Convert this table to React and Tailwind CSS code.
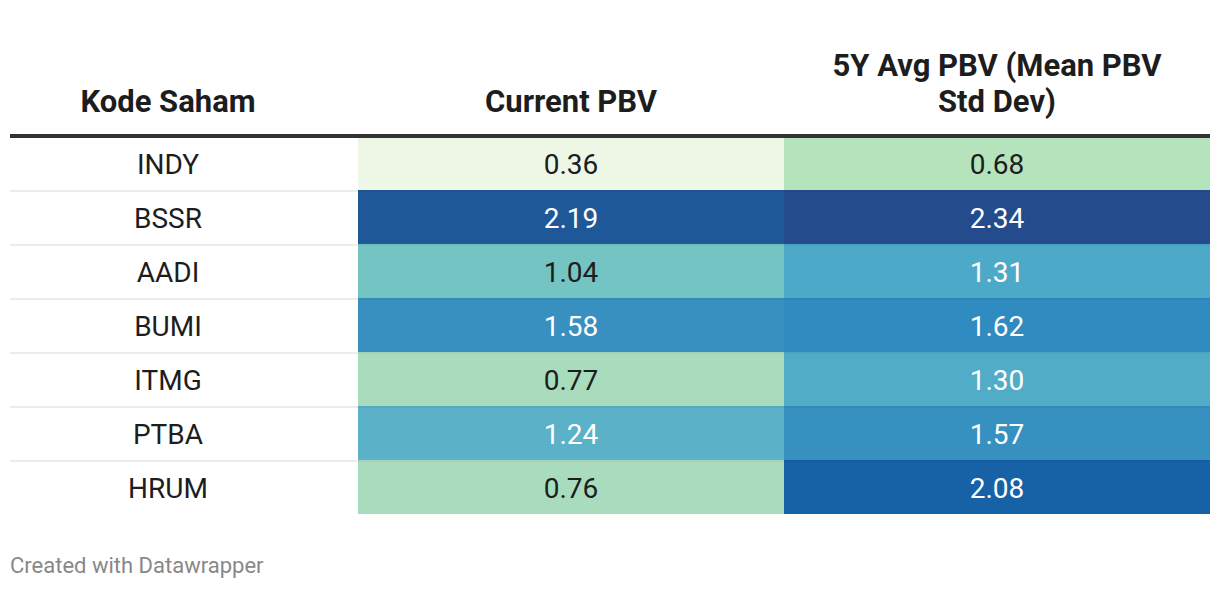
import React from "react";

const rows = [
  { code: "INDY", a: "0.36", ab: "bg-[#eef7e6]", at: "text-[#1d1d1d]", b: "0.68", bb: "bg-[#b5e3bb]", bt: "text-[#1d1d1d]" },
  { code: "BSSR", a: "2.19", ab: "bg-[#1f5899]", at: "text-white", b: "2.34", bb: "bg-[#244b8b]", bt: "text-white" },
  { code: "AADI", a: "1.04", ab: "bg-[#74c4c4]", at: "text-[#1d1d1d]", b: "1.31", bb: "bg-[#4da9c8]", bt: "text-white" },
  { code: "BUMI", a: "1.58", ab: "bg-[#3790c0]", at: "text-white", b: "1.62", bb: "bg-[#2f8bc0]", bt: "text-white" },
  { code: "ITMG", a: "0.77", ab: "bg-[#a8dcbd]", at: "text-[#1d1d1d]", b: "1.30", bb: "bg-[#51acc8]", bt: "text-white" },
  { code: "PTBA", a: "1.24", ab: "bg-[#5ab1c8]", at: "text-white", b: "1.57", bb: "bg-[#3690c0]", bt: "text-white" },
  { code: "HRUM", a: "0.76", ab: "bg-[#a9dcbe]", at: "text-[#1d1d1d]", b: "2.08", bb: "bg-[#1762a6]", bt: "text-white" },
];

export default function App() {
  return (
    <div
      className="w-[1220px] h-[590px] bg-white px-[10px] pt-[48px]"
      style={{ fontFamily: "Roboto, 'Liberation Sans', sans-serif" }}
    >
      <div className="grid grid-cols-[348px_426px_426px] items-end border-b-4 border-[#333333] pb-[14px] text-[31px] leading-[36px] font-bold text-[#1d1d1d]">
        <div className="pr-[32px] text-center">Kode Saham</div>
        <div className="text-center">Current PBV</div>
        <div className="text-center">
          5Y Avg PBV (Mean PBV
          <br />
          Std Dev)
        </div>
      </div>
      {rows.map((r, i) => (
        <div
          key={r.code}
          className={
            "grid grid-cols-[348px_426px_426px] text-[28px] " +
            (i === 0 ? "h-[52px]" : "h-[54px]")
          }
        >
          <div
            className={
              "flex items-center justify-center pr-[32px] pt-[2px] text-[#1d1d1d] " +
              (i === 0 ? "" : "border-t-2 border-[#ececec]")
            }
          >
            {r.code}
          </div>
          <div
            className={
              "flex items-center justify-center pt-[2px] " +
              r.ab +
              " " +
              r.at +
              (i === 0 ? "" : " border-t-2 border-black/[0.04]")
            }
          >
            {r.a}
          </div>
          <div
            className={
              "flex items-center justify-center pt-[2px] " +
              r.bb +
              " " +
              r.bt +
              (i === 0 ? "" : " border-t-2 border-black/[0.04]")
            }
          >
            {r.b}
          </div>
        </div>
      ))}
      <div className="mt-[40px] text-[22px] leading-[24px] text-[#888888]">
        Created with Datawrapper
      </div>
    </div>
  );
}
